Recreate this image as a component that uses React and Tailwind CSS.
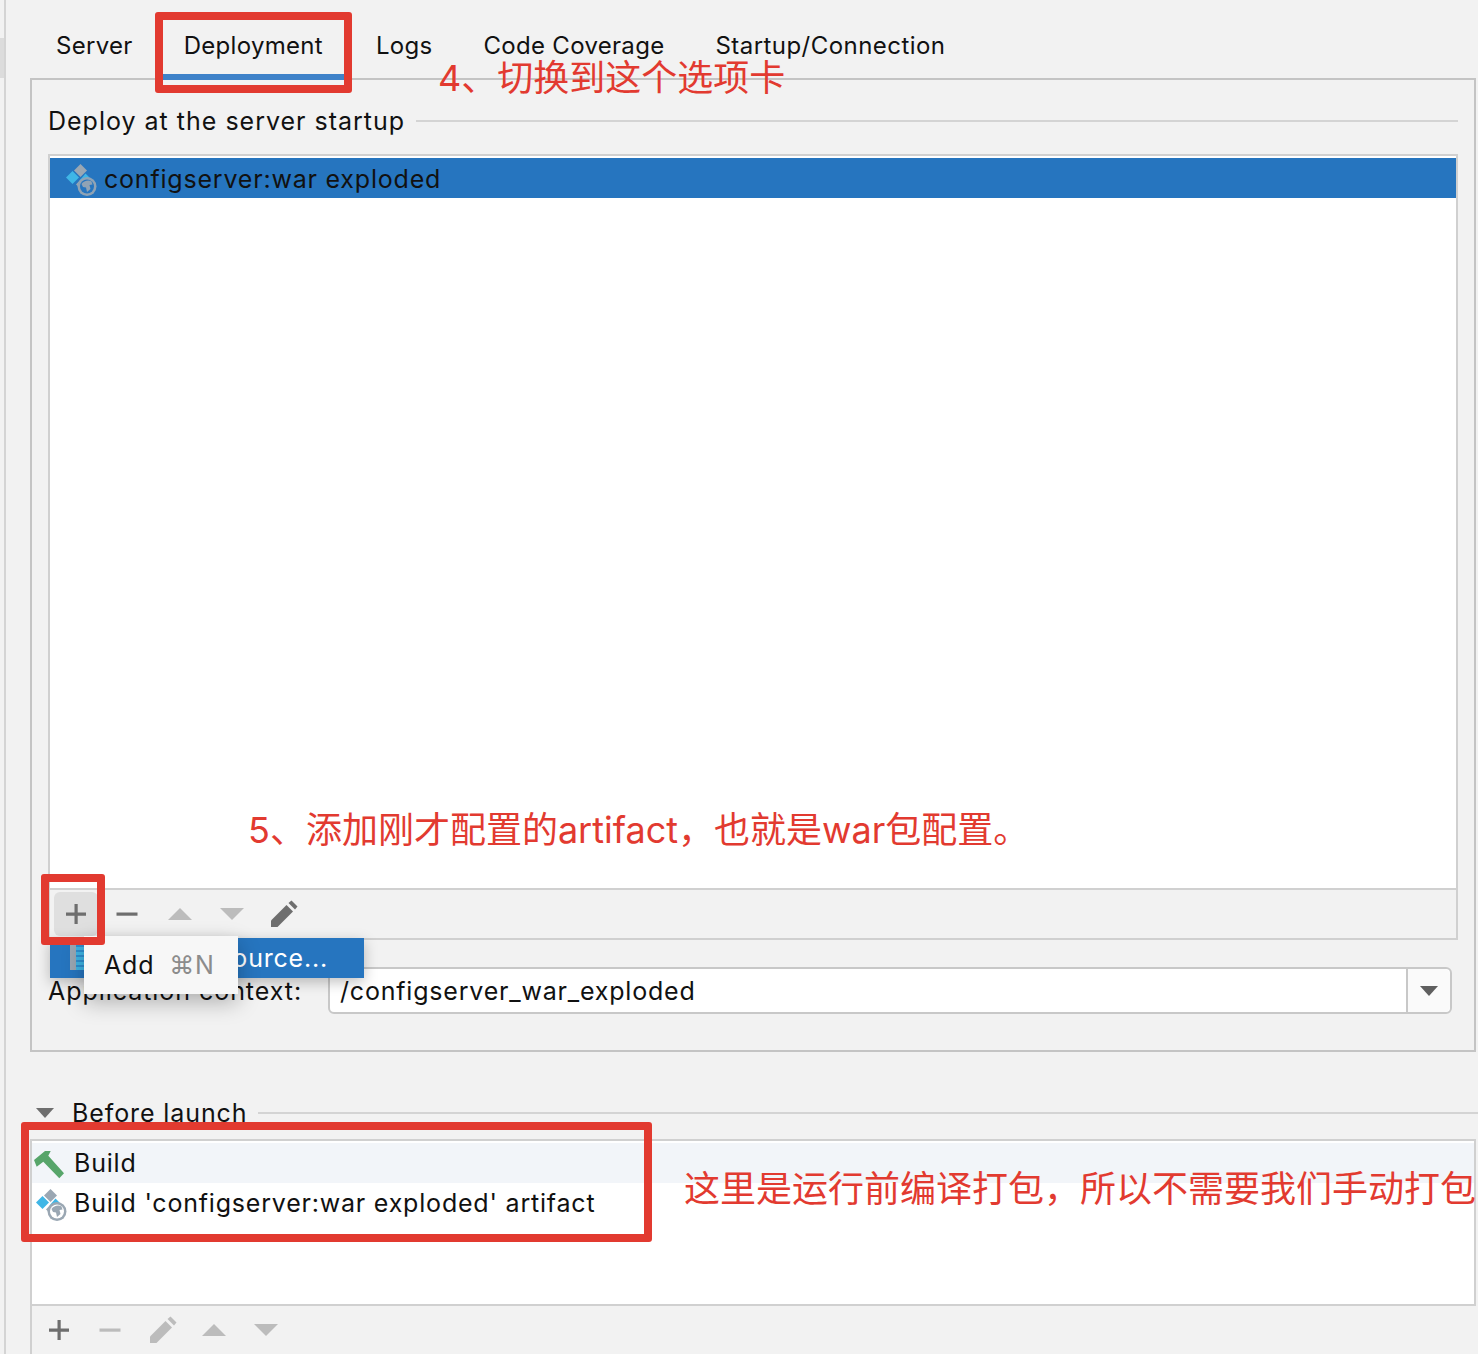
function ArtifactIcon({ selected }) {
  const ring = selected ? "#8fa3b5" : "#9aa7b3";
  const inner = selected ? "#2675bf" : "#ffffff";
  const land = selected ? "#8fa3b5" : "#9aa7b3";
  return (
    <svg width="32" height="32" viewBox="0 0 32 32" className="mt-[4px] shrink-0">
      <path d="M15.500 0l6.500 6.500-6.500 6.500L9 6.500z" fill="#9aa7b3" />
      <path d="M7.500 7l6.500 6.500L7.500 20 1 13.500z" fill="#3fb6e6" />
      <path d="M20.500 9.500l7 7H14.500z" fill="#3fb6e6" />
      <path d="M15 16l3 0-3 5 3 6-7-6.500z" fill="#9aa7b3" />
      <circle cx="22" cy="22.500" r="9.500" fill={ring} />
      <circle cx="22" cy="22.500" r="7" fill={inner} />
      <path d="M16.500 20c2-3 7-4.500 10-2.500l1 3-3 .5 1 4-3.500 3-1-4.500-3-.5z" fill={land} />
    </svg>
  );
}

function Plus({ color = "#6e6e6e" }) {
  return (
    <svg width="22" height="22" viewBox="0 0 22 22">
      <path d="M9.500 1h3.200v8.500H21v3.200h-8.300V21H9.500v-8.300H1V9.500h8.500z" fill={color} />
    </svg>
  );
}
function Minus({ color = "#6e6e6e" }) {
  return (
    <svg width="22" height="22" viewBox="0 0 22 22">
      <rect x="0.500" y="9.500" width="21" height="3.200" fill={color} />
    </svg>
  );
}
function Up() {
  return (
    <svg width="24" height="14" viewBox="0 0 24 14">
      <path d="M12 1l12 12H0z" fill="#bcbcbc" />
    </svg>
  );
}
function Down() {
  return (
    <svg width="24" height="14" viewBox="0 0 24 14">
      <path d="M0 1h24L12 13z" fill="#bcbcbc" />
    </svg>
  );
}
function Pencil({ color = "#6e6e6e" }) {
  return (
    <svg width="28" height="28" viewBox="0 0 28 28">
      <path d="M1 27v-6.500L16.500 5l6.500 6.500L7.500 27z" fill={color} />
      <path d="M18.500 3l3-2.500 6 6L25 9.500z" fill={color} />
    </svg>
  );
}
function Hammer() {
  return (
    <svg width="32" height="36" viewBox="0 0 32 36" className="shrink-0">
      <path d="M2 15L13 6h5.700l-2.400 4.700L32 28.300 27.300 33.300 11.300 16.700 4.700 21.700z" fill="#57a56a" />
    </svg>
  );
}

export default function App() {
  return (
    <div className="relative h-[1354px] w-[1478px] overflow-hidden bg-[#f2f2f2] font-['Inter','Noto_Sans_CJK_SC',sans-serif] text-[25px] leading-none tracking-[0.8px] text-[#111]">
      <div className="absolute left-0 top-[38px] h-[40px] w-[5px] bg-[#dcdcdc]" />
      <div className="absolute left-[4px] top-0 h-full w-[2px] bg-[#d4d4d4]" />

      <div className="ml-[30px] flex h-[78px] items-start pt-[34px] text-[24px] tracking-[0.3px]">
        <span className="ml-[26px]">Server</span>
        <div className="relative ml-[51px]">
          <span>Deployment</span>
          <div className="absolute left-[-22px] top-[40px] h-[6px] w-[183px] bg-[#3f82c9]" />
        </div>
        <span className="ml-[53px]">Logs</span>
        <span className="ml-[51px]">Code Coverage</span>
        <span className="ml-[51px] tracking-[0.45px]">Startup/Connection</span>
      </div>

      <div className="ml-[30px] flex h-[974px] w-[1446px] flex-col border-2 border-[#c4c4c4] px-[16px]">
        <div className="flex h-[74px] shrink-0 items-center pt-[7px]">
          <span className="pt-[2px] tracking-[1px]">Deploy at the server startup</span>
          <div className="ml-[11px] h-[2px] grow bg-[#d4d4d4]" />
        </div>
        <div className="flex h-[786px] shrink-0 flex-col border-2 border-[#d0d0d0] bg-white pt-[2px]">
          <div className="flex h-[40px] items-center bg-[#2675bf] pl-[15px]">
            <ArtifactIcon selected />
            <span className="ml-[7px] pt-[2px]">configserver:war exploded</span>
          </div>
          <div className="grow" />
          <div className="flex h-[50px] items-center gap-[30px] border-t-2 border-[#d0d0d0] bg-[#f2f2f2] pl-[4px]">
            <div className="flex h-[44px] w-[44px] items-center justify-center rounded-[6px] bg-[#dfdfdf]">
              <Plus />
            </div>
            <div className="-ml-[12px]"><Minus /></div>
            <Up />
            <div className="-ml-[2px]"><Down /></div>
            <div className="-ml-[4px]"><Pencil /></div>
          </div>
        </div>
        <div className="mt-[27px] flex h-[47px] items-center">
          <span className="w-[280px] shrink-0 pt-[2px] tracking-[0.95px]">Application context:</span>
          <div className="flex h-[47px] w-[1124px] items-stretch rounded-[6px] border-2 border-[#c8c8c8] bg-white">
            <div className="flex grow items-center pl-[10px] pt-[2px]">/configserver_war_exploded</div>
            <div className="flex w-[44px] items-center justify-center rounded-r-[6px] border-l-2 border-[#c8c8c8] bg-[#fafafa]">
              <svg width="18" height="10" viewBox="0 0 18 10"><path d="M0 0h18L9 10z" fill="#5f5f5f" /></svg>
            </div>
          </div>
        </div>
      </div>

      <div className="ml-[36px] mt-[48px] flex h-[26px] items-center">
        <svg width="18" height="10" viewBox="0 0 18 10"><path d="M0 0h18L9 10z" fill="#6e6e6e" /></svg>
        <span className="ml-[18px] tracking-[0.9px]">Before launch</span>
        <div className="ml-[11px] h-[2px] grow bg-[#d4d4d4]" />
      </div>

      <div className="ml-[30px] mt-[13px] flex h-[165px] w-[1446px] flex-col border-2 border-b-0 border-[#d0d0d0] bg-white pt-[2px]">
        <div className="flex h-[40px] items-center bg-[#f2f5f9]">
          <Hammer />
          <span className="ml-[10px]">Build</span>
        </div>
        <div className="flex h-[40px] items-center pl-[3px]">
          <ArtifactIcon />
          <span className="ml-[7px]">Build 'configserver:war exploded' artifact</span>
        </div>
      </div>
      <div className="ml-[30px] flex h-[50px] w-[1446px] items-center gap-[30px] border-l-2 border-t-2 border-[#d0d0d0] pl-[16px]">
        <Plus />
        <div className="-ml-[1px]"><Minus color="#bcbcbc" /></div>
        <div className="-ml-[2px]"><Pencil color="#bcbcbc" /></div>
        <div className="-ml-[5px]"><Up /></div>
        <div className="-ml-[2px]"><Down /></div>
      </div>

      <div className="absolute left-[50px] top-[938px] flex h-[40px] w-[314px] items-center justify-end bg-[#2675bf] pr-[36px] text-white shadow-[0_4px_14px_rgba(0,0,0,0.25)]">
        <div className="absolute left-[20px] top-[7px] flex h-[25px]">
          <div className="w-[6px] bg-[#9aa7b3]" />
          <div className="w-[8px] bg-[repeating-linear-gradient(0deg,#3fb6e6_0,#3fb6e6_3px,#2f8fd0_3px,#2f8fd0_5px)]" />
        </div>
        ource...
      </div>
      <div className="absolute left-[84px] top-[936px] flex h-[58px] w-[154px] items-center gap-[15px] bg-[#f7f7f7] pl-[20px] shadow-[0_8px_22px_rgba(0,0,0,0.28)]">
        <span>Add</span>
        <span className="text-[#8c8c8c]">⌘N</span>
      </div>

      <div className="absolute left-[155px] top-[12px] h-[81px] w-[197px] rounded-[3px] border-[8px] border-[#e23a30]" />
      <div className="absolute left-[41px] top-[874px] h-[71px] w-[64px] rounded-[3px] border-[8px] border-[#e23a30]" />
      <div className="absolute left-[21px] top-[1122px] h-[120px] w-[631px] rounded-[3px] border-[8px] border-[#e23a30]" />

      <div className="absolute left-[438px] top-[60px] whitespace-nowrap text-[36px] tracking-normal text-[#e23a30]">4、切换到这个选项卡</div>
      <div className="absolute left-[248px] top-[812px] whitespace-nowrap text-[36px] tracking-normal text-[#e23a30]">{"5、添加刚才配置的artifact\uFF0C也就是war包配置。"}</div>
      <div className="absolute left-[684px] top-[1171px] whitespace-nowrap text-[36px] tracking-normal text-[#e23a30]">{"这里是运行前编译打包\uFF0C所以不需要我们手动打包"}</div>
    </div>
  );
}
